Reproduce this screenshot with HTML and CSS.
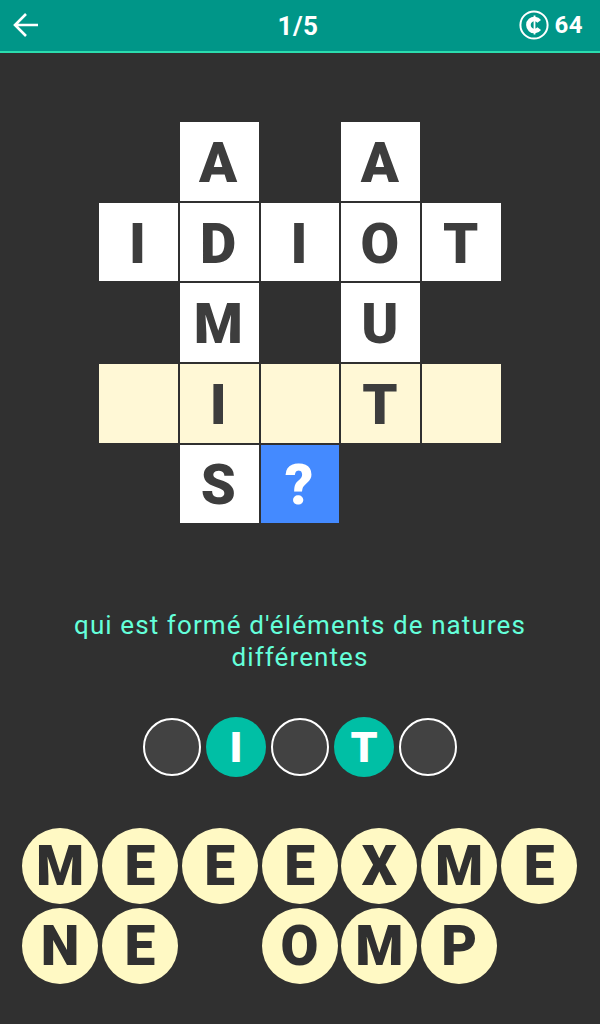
FILE: index.html
```html
<!DOCTYPE html>
<html lang="fr">
<head>
    <meta charset="UTF-8">
    <meta name="viewport" content="width=device-width, initial-scale=1.0">
    <title>Mots croisés</title>
    <link rel="stylesheet" href="styles.css">
</head>
<body>
    <header class="top-bar">
        <div class="bar-side">
            <svg class="back-icon" viewBox="0 0 26 26" width="26" height="26">
                <path d="M25 13H2M13 2 2 13l11 11" fill="none" stroke="#fff" stroke-width="2.6"/>
            </svg>
        </div>
        <div class="level">1/5</div>
        <div class="bar-side coins">
            <svg class="coin-icon" viewBox="0 0 30 30" width="30" height="30">
                <circle cx="15" cy="15" r="13.6" fill="none" stroke="#fff" stroke-width="2"/>
                <path d="M20.2 11.4A6 6 0 1 0 20.2 18.6" fill="none" stroke="#fff" stroke-width="4.6"/>
                <path d="M15.5 5.5v19" stroke="#fff" stroke-width="1.8"/>
            </svg>
            <span class="coin-count">64</span>
        </div>
    </header>

    <div class="board">
        <div class="cell empty"></div>
        <div class="cell">A</div>
        <div class="cell empty"></div>
        <div class="cell">A</div>
        <div class="cell empty"></div>

        <div class="cell">I</div>
        <div class="cell">D</div>
        <div class="cell">I</div>
        <div class="cell">O</div>
        <div class="cell">T</div>

        <div class="cell empty"></div>
        <div class="cell">M</div>
        <div class="cell empty"></div>
        <div class="cell">U</div>
        <div class="cell empty"></div>

        <div class="cell current"></div>
        <div class="cell current">I</div>
        <div class="cell current"></div>
        <div class="cell current">T</div>
        <div class="cell current"></div>

        <div class="cell empty"></div>
        <div class="cell">S</div>
        <div class="cell hint">?</div>
        <div class="cell empty"></div>
        <div class="cell empty"></div>
    </div>

    <p class="clue">qui est formé d'éléments de natures différentes</p>

    <div class="answer">
        <div class="slot"></div>
        <div class="slot filled">I</div>
        <div class="slot"></div>
        <div class="slot filled">T</div>
        <div class="slot"></div>
    </div>

    <div class="keys">
        <button class="key">M</button>
        <button class="key">E</button>
        <button class="key">E</button>
        <button class="key">E</button>
        <button class="key">X</button>
        <button class="key">M</button>
        <button class="key">E</button>
        <button class="key">N</button>
        <button class="key">E</button>
        <div class="key-gap"></div>
        <button class="key">O</button>
        <button class="key">M</button>
        <button class="key">P</button>
    </div>
</body>
</html>
```
FILE: styles.css
```css
* {
    margin: 0;
    padding: 0;
    box-sizing: border-box;
    font-family: Roboto, "Liberation Sans", sans-serif;
}

body {
    background: #303030;
    width: 600px;
    height: 1024px;
    overflow: hidden;
}

.top-bar {
    display: flex;
    align-items: center;
    height: 53px;
    padding: 0 17px 1px 13px;
    background: #009688;
    border-bottom: 2px solid #2bdcae;
    color: #fff;
    font-weight: 700;
}

.bar-side {
    flex: 1;
    display: flex;
}

.level {
    padding-top: 2px;
    font-size: 26px;
    letter-spacing: 0.5px;
}

.coins {
    align-items: center;
    justify-content: flex-end;
    gap: 5px;
}

.coin-count {
    font-size: 24px;
    letter-spacing: 0.5px;
}

.board {
    display: grid;
    grid-template-columns: repeat(5, 78.8px);
    grid-auto-rows: 78.6px;
    gap: 2px;
    width: 402px;
    margin: 69.2px auto 0;
}

.cell {
    display: flex;
    align-items: center;
    justify-content: center;
    padding: 3px 2px 0 0;
    background: #fff;
    color: #3d3d3d;
    font-size: 56px;
    font-weight: 900;
}

.cell.empty {
    background: none;
}

.cell.current {
    background: #fff8d6;
}

.cell.hint {
    background: #448aff;
    color: #fff;
}

.clue {
    width: 480px;
    margin: 85.8px auto 0;
    color: #64ffda;
    font-size: 26px;
    line-height: 32px;
    letter-spacing: 1.1px;
    text-align: center;
}

.answer {
    display: flex;
    justify-content: center;
    align-items: center;
    gap: 5px;
    margin-top: 44px;
}

.slot {
    display: flex;
    align-items: center;
    justify-content: center;
    width: 58px;
    height: 58px;
    border: 2px solid #fff;
    border-radius: 50%;
    background: #424242;
}

.slot.filled {
    width: 60px;
    height: 60px;
    border: none;
    background: #00bfa5;
    color: #fff;
    font-size: 43px;
    font-weight: 900;
}

.keys {
    display: grid;
    grid-template-columns: repeat(7, 76px);
    grid-auto-rows: 76px;
    gap: 4px 3.85px;
    margin: 51px 0 0 22px;
}

.key {
    border: none;
    border-radius: 50%;
    background: #fff9c4;
    color: #303030;
    font-size: 55px;
    font-weight: 900;
}
```
